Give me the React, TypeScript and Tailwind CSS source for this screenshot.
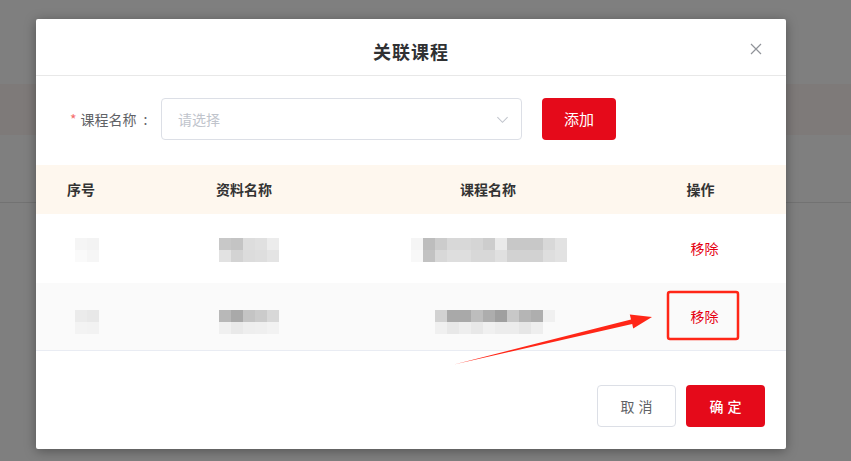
import React from 'react';

type Mosaic = { top: string[]; bottom: string[]; shift: string };

const rows: { bg: string; offset: string; cells: Mosaic[] }[] = [
  {
    bg: 'bg-white',
    offset: 'mt-[3px]',
    cells: [
      { top: ['bg-[#f5f5f5]', 'bg-[#f3f3f3]'], bottom: ['bg-[#fafafa]', 'bg-[#f6f6f6]'], shift: 'ml-[11px]' },
      {
        top: ['bg-[#c8c8c8]', 'bg-[#c4c4c4]', 'bg-[#dddddd]', 'bg-[#e0e0e0]', 'bg-[#ececec]'],
        bottom: ['bg-[#e2e2e2]', 'bg-[#d3d3d3]', 'bg-[#dcdcdc]', 'bg-[#dedede]', 'bg-[#e4e4e4]'],
        shift: 'ml-[10px]',
      },
      {
        top: ['bg-[#f5f5f5]', 'bg-[#bdbdbd]', 'bg-[#cccccc]', 'bg-[#d8d8d8]', 'bg-[#d8d8d8]', 'bg-[#d5d5d5]', 'bg-[#cdcdcd]', 'bg-[#eaeaea]', 'bg-[#c8c8c8]', 'bg-[#c8c8c8]', 'bg-[#c8c8c8]', 'bg-[#d8d8d8]', 'bg-[#e2e2e2]'],
        bottom: ['bg-[#f8f8f8]', 'bg-[#c2c2c2]', 'bg-[#d8d8d8]', 'bg-[#dedede]', 'bg-[#dedede]', 'bg-[#d8d8d8]', 'bg-[#d8d8d8]', 'bg-[#e0e0e0]', 'bg-[#d2d2d2]', 'bg-[#d2d2d2]', 'bg-[#d2d2d2]', 'bg-[#dedede]', 'bg-[#e2e2e2]'],
        shift: 'ml-[2px]',
      },
    ],
  },
  {
    bg: 'bg-[#fafafa]',
    offset: 'mt-[10px]',
    cells: [
      { top: ['bg-[#ebebeb]', 'bg-[#e8e8e8]'], bottom: ['bg-[#f3f3f3]', 'bg-[#f2f2f2]'], shift: 'ml-[11px]' },
      {
        top: ['bg-[#b8b8b8]', 'bg-[#a9a9a9]', 'bg-[#c4c4c4]', 'bg-[#cbcbcb]', 'bg-[#d8d8d8]'],
        bottom: ['bg-[#f0f0f0]', 'bg-[#e9e9e9]', 'bg-[#eeeeee]', 'bg-[#efefef]', 'bg-[#f2f2f2]'],
        shift: 'ml-[10px]',
      },
      {
        top: ['bg-[#d2d2d2]', 'bg-[#a9a9a9]', 'bg-[#a9a9a9]', 'bg-[#bdbdbd]', 'bg-[#adadad]', 'bg-[#9f9f9f]', 'bg-[#c8c8c8]', 'bg-[#b5b5b5]', 'bg-[#aeaeae]', 'bg-[#f0f0f0]'],
        bottom: ['bg-[#f0f0f0]', 'bg-[#e8e8e8]', 'bg-[#eeeeee]', 'bg-[#e8e8e8]', 'bg-[#f0f0f0]', 'bg-[#ececec]', 'bg-[#ececec]', 'bg-[#e6e6e6]', 'bg-[#eeeeee]', 'bg-[#fafafa]'],
        shift: 'ml-[14px]',
      },
    ],
  },
];

const cols = 'grid grid-cols-[91px_234px_254px_171px]';

const Blur: React.FC<{ m: Mosaic; offset: string }> = ({ m, offset }) => (
  <div className={`flex flex-col ${m.shift} ${offset}`}>
    <div className="flex">
      {m.top.map((c, i) => <div key={i} className={`w-[12px] h-[12px] ${c}`} />)}
    </div>
    <div className="flex">
      {m.bottom.map((c, i) => <div key={i} className={`w-[12px] h-[12px] ${c}`} />)}
    </div>
  </div>
);

const App: React.FC = () => {
  return (
    <div className="relative w-full h-[461px] overflow-hidden bg-[#7f7f7f] font-['Microsoft_YaHei','Noto_Sans_CJK_SC',sans-serif]">
      {/* page behind the mask */}
      <div className="mt-[84px] h-[51px] bg-[#7e7a79]" />
      <div className="mt-[67px] h-px bg-[#727272]" />

      {/* dialog */}
      <div className="absolute left-[36px] top-[19px] w-[750px] h-[430px] bg-white rounded-[2px] shadow-[0_2px_12px_rgba(0,0,0,0.35)] flex flex-col">
        <div className="relative h-[57px] pt-[9px] flex items-center justify-center border-b border-[#e8e8e8]">
          <h3 className="text-[18px] font-bold text-[#303133] tracking-[1px]">关联课程</h3>
          <button className="absolute right-[24px] top-[24px] text-[#909399]">
            <svg className="w-[12px] h-[12px]" viewBox="0 0 12 12" fill="none" stroke="currentColor" strokeWidth="1.2">
              <path d="M1 1l10 10M11 1L1 11" />
            </svg>
          </button>
        </div>

        <div className="flex items-center pt-[22px] pl-[34px]">
          <label className="w-[91px] flex items-center text-[14px] text-[#606266]">
            <span className="text-[#f56c6c] mr-[4px]">*</span>
            课程名称
            <span className="ml-[7px]">:</span>
          </label>
          <div className="w-[361px] h-[42px] border border-[#dcdfe6] rounded-[4px] flex items-center justify-between pl-[16px] pr-[12px]">
            <span className="text-[14px] text-[#c0c4cc]">请选择</span>
            <svg className="w-[13px] h-[13px] text-[#c0c4cc]" viewBox="0 0 14 14" fill="none" stroke="currentColor" strokeWidth="1.1">
              <path d="M1.5 4.5L7 10l5.5-5.5" />
            </svg>
          </div>
          <button className="ml-[20px] w-[74px] h-[42px] rounded-[4px] bg-[#e50a1a] text-white text-[15px]">添加</button>
        </div>

        <div className="mt-[25px]">
          <div className={`${cols} h-[49px] items-center bg-[#fef7ee] text-[14px] font-bold text-[#333333] text-center`}>
            <div className="pr-[1px]">序号</div>
            <div>资料名称</div>
            <div>课程名称</div>
            <div>操作</div>
          </div>
          {rows.map((r, ri) => (
            <div key={ri} className={`${cols} items-center ${r.bg} ${ri === 0 ? 'h-[69px]' : 'h-[68px] border-b border-[#e9ecf3]'}`}>
              {r.cells.map((m, ci) => (
                <div key={ci} className="flex justify-center">
                  <Blur m={m} offset={r.offset} />
                </div>
              ))}
              <div className="flex justify-center">
                <span className="ml-[8px] text-[14px] text-[#e60012]">移除</span>
              </div>
            </div>
          ))}
        </div>

        <div className="mt-auto flex justify-end gap-[10px] pr-[21px] pb-[22px]">
          <button className="w-[79px] h-[42px] rounded-[4px] border border-[#dcdfe6] bg-white text-[14px] text-[#606266] tracking-[4px] pl-[4px]">取消</button>
          <button className="w-[79px] h-[42px] rounded-[4px] bg-[#e50a1a] text-[14px] font-medium text-white tracking-[4px] pl-[4px]">确定</button>
        </div>
      </div>

      {/* annotation */}
      <svg className="absolute inset-0 w-[851px] h-[461px] pointer-events-none" viewBox="0 0 851 461">
        <rect x="668" y="292" width="70" height="47" rx="2" fill="none" stroke="#ff2617" strokeWidth="2.5" />
        <polygon points="454,364.5 631,319.6 629.8,314.6 652,317 633.2,328.6 632.2,324" fill="#ff2617" />
      </svg>
    </div>
  );
};

export default App;
